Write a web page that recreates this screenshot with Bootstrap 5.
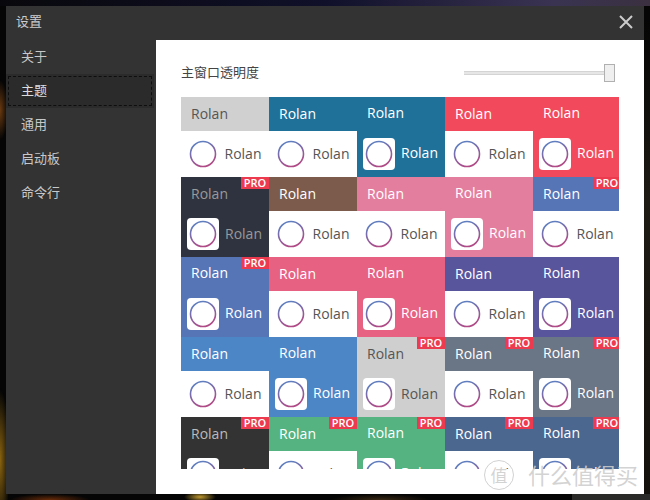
<!DOCTYPE html>
<html lang="zh">
<head>
    <meta charset="UTF-8">
    <meta name="viewport" content="width=device-width, initial-scale=1">
    <title>设置</title>
    <link href="https://cdn.jsdelivr.net/npm/bootstrap@5.3.0/dist/css/bootstrap.min.css" rel="stylesheet">
    <style>
        html, body { height: 100%; }
        body {
            font-family: "Open Sans", "Noto Sans CJK SC", sans-serif;
            overflow: hidden;
            background:
                radial-gradient(ellipse 10px 70px at 0 460px, #8a6410, transparent),
                radial-gradient(ellipse 8px 30px at 0 110px, #6a3a10, transparent),
                radial-gradient(ellipse 16px 5px at 200px 497px, #c09a30, transparent),
                radial-gradient(ellipse 40px 6px at 50px 500px, #6a2c08, transparent),
                radial-gradient(ellipse 50px 6px at 380px 500px, #3a2a14, transparent),
                linear-gradient(90deg, transparent 88%, #2a2a28 88%) 0 494px / 100% 6px no-repeat,
                linear-gradient(180deg, transparent 4%, #1e1a14 40%, #14100c 100%) 644px 0 / 6px 100% no-repeat,
                linear-gradient(90deg, #08080c, #10102a 50%, #3a3452 85%, #3a3040) 0 0 / 100% 6px no-repeat,
                #050505;
        }
        .win-frame { width: 638px; height: 488px; margin: 6px 0 0 6px; background: #333; position: relative; }
        .win-title { height: 34px; padding: 0 11px 2px 10px; color: #ccc; font-size: 13px; }
        .win-close { width: 14px; height: 14px; }
        .win-side { width: 150px; }
        .side-item { height: 34px; padding: 0 0 1px 15px; color: #c8c8c8; font-size: 13px; }
        .side-item.active-item { background: #2b2b2b; width: 148px; color: #ddd; padding-bottom: 0; outline: 1px dashed #0e0e0e; outline-offset: -3px; }
        .win-main { width: 488px; height: 454px; background: #fff; padding: 16px 25px 0; }
        .opacity-row { height: 34px; margin-bottom: 7px; color: #444; font-size: 13px; }
        .range-track { width: 151px; height: 18px; margin-right: 4px; position: relative; }
        .range-track::before { content: ""; position: absolute; left: 0; right: 4px; top: 7px; height: 4px; background: #e6e6e6; border-top: 1px solid #d4d4d4; border-bottom: 1px solid #d4d4d4; }
        .range-thumb { position: absolute; right: 0; top: 0; width: 11px; height: 18px; background: #efefef; border: 1px solid #b0b0b0; }
        .tile-clip { width: 438px; height: 372px; overflow: hidden; }
        .tile-grid { display: grid; width: 440px; grid-template-columns: repeat(5, 88px); grid-auto-rows: 80px; }
        .tile { position: relative; background: #fff; color: #555; font-size: 14px; line-height: 1; }
        .tile-head { height: 34px; padding: 10px 0 0 10px; }
        .tile-body { height: 46px; padding-left: 7px; gap: 5.5px; }
        .tile-icon { width: 32px; height: 32px; border-radius: 4px; flex: none; margin-left: -1px; }
        .tile-icon svg { display: block; }
        .tile.solid .tile-head { padding-top: 9px; }
        .tile.solid .tile-body { padding-left: 6px; gap: 6px; }
        .tile.solid .tile-label { margin-bottom: 2px; }
        .tile.solid .tile-icon { background: #fff; margin-left: 0; }
        .tile.solid-low .tile-head { padding-top: 10px; }
        .tile.solid-low .tile-label { margin-bottom: 0; }
        .pro-tag { position: absolute; right: 0; top: 0; width: 28px; height: 12px; background: #ee3a4f; color: #fff; font-size: 11px; font-weight: 600; line-height: 12px; text-align: center; }
        .stamp { position: absolute; right: 6px; top: 454px; height: 30px; color: rgba(205,205,205,.88); font-size: 22px; line-height: 1; white-space: nowrap; gap: 14px; }
        .stamp-ring { width: 30px; height: 30px; border: 1px solid rgba(190,190,190,.7); border-radius: 50%; font-size: 17px; }
    </style>
</head>
<body>
    <svg width="0" height="0" class="position-absolute">
        <defs>
            <linearGradient id="ringGrad" x1="0.25" y1="0" x2="0.65" y2="1">
                <stop offset="0.1" stop-color="#5f7dbf"/>
                <stop offset="0.95" stop-color="#b04a86"/>
            </linearGradient>
        </defs>
    </svg>
    <div class="win-frame d-flex flex-column">
        <div class="win-title d-flex align-items-center justify-content-between">
            <span>设置</span>
            <svg class="win-close" viewBox="0 0 14 14"><path d="M1 1L13 13M13 1L1 13" stroke="#ccc" stroke-width="2" fill="none"/></svg>
        </div>
        <div class="d-flex flex-grow-1">
            <div class="win-side">
                <div class="side-item d-flex align-items-center">关于</div>
                <div class="side-item active-item d-flex align-items-center">主题</div>
                <div class="side-item d-flex align-items-center">通用</div>
                <div class="side-item d-flex align-items-center">启动板</div>
                <div class="side-item d-flex align-items-center">命令行</div>
            </div>
            <div class="win-main">
                <div class="opacity-row d-flex align-items-center justify-content-between">
                    <span>主窗口透明度</span>
                    <div class="range-track"><div class="range-thumb"></div></div>
                </div>
                <div class="tile-clip">
                    <div class="tile-grid" id="tiles"></div>
                </div>
            </div>
        </div>
        <div class="stamp d-flex align-items-center"><span class="stamp-ring d-flex align-items-center justify-content-center">值</span><span>什么值得买</span></div>
    </div>

    <script>
// colour, text colour, style (0 header only, 1 solid, 2 solid with lower text), pro
var tiles = [
    ["#d0d0d0", "#555", 0, 0], ["#1f7199", "#fff", 0, 0], ["#1f7199", "#fff", 1, 0], ["#f24a5c", "#fff", 0, 0], ["#f24a5c", "#fff", 1, 0],
    ["#2f3340", "#999", 2, 1], ["#7c5b4c", "#fff", 0, 0], ["#e37e9e", "#fff", 0, 0], ["#e37e9e", "#fff", 1, 0], ["#5575b6", "#fff", 0, 1],
    ["#5575b6", "#fff", 1, 1], ["#e66182", "#fff", 0, 0], ["#e66182", "#fff", 1, 0], ["#58559d", "#fff", 0, 0], ["#58559d", "#fff", 1, 0],
    ["#4c86c6", "#fff", 0, 0], ["#4c86c6", "#fff", 1, 0], ["#cfcfcf", "#555", 2, 1], ["#6a7585", "#fff", 0, 1], ["#6a7585", "#fff", 1, 1],
    ["#333333", "#bbb", 2, 1], ["#55b382", "#fff", 0, 1], ["#55b382", "#fff", 1, 1], ["#4b6790", "#fff", 0, 1], ["#4b6790", "#fff", 1, 1]
];
var ring = '<svg width="32" height="32" viewBox="0 0 32 32"><circle cx="16" cy="16" r="12.5" fill="#fff" stroke="url(#ringGrad)" stroke-width="1.6"/></svg>';
document.getElementById("tiles").innerHTML = tiles.map(function(t) {
    var solid = t[2] > 0;
    var tileBg = solid ? "background:" + t[0] + ";color:" + t[1] : "";
    var headBg = solid ? "" : "background:" + t[0] + ";color:" + t[1];
    return '<div class="tile' + (solid ? ' solid' : '') + (t[2] == 2 ? ' solid-low' : '') + '" style="' + tileBg + '">' +
        (t[3] ? '<span class="pro-tag">PRO</span>' : '') +
        '<div class="tile-head" style="' + headBg + '">Rolan</div>' +
        '<div class="tile-body d-flex align-items-center"><span class="tile-icon">' + ring + '</span><span class="tile-label">Rolan</span></div>' +
        '</div>';
}).join("");
    </script>
    <script src="https://cdn.jsdelivr.net/npm/bootstrap@5.3.0/dist/js/bootstrap.bundle.min.js"></script>
</body>
</html>
